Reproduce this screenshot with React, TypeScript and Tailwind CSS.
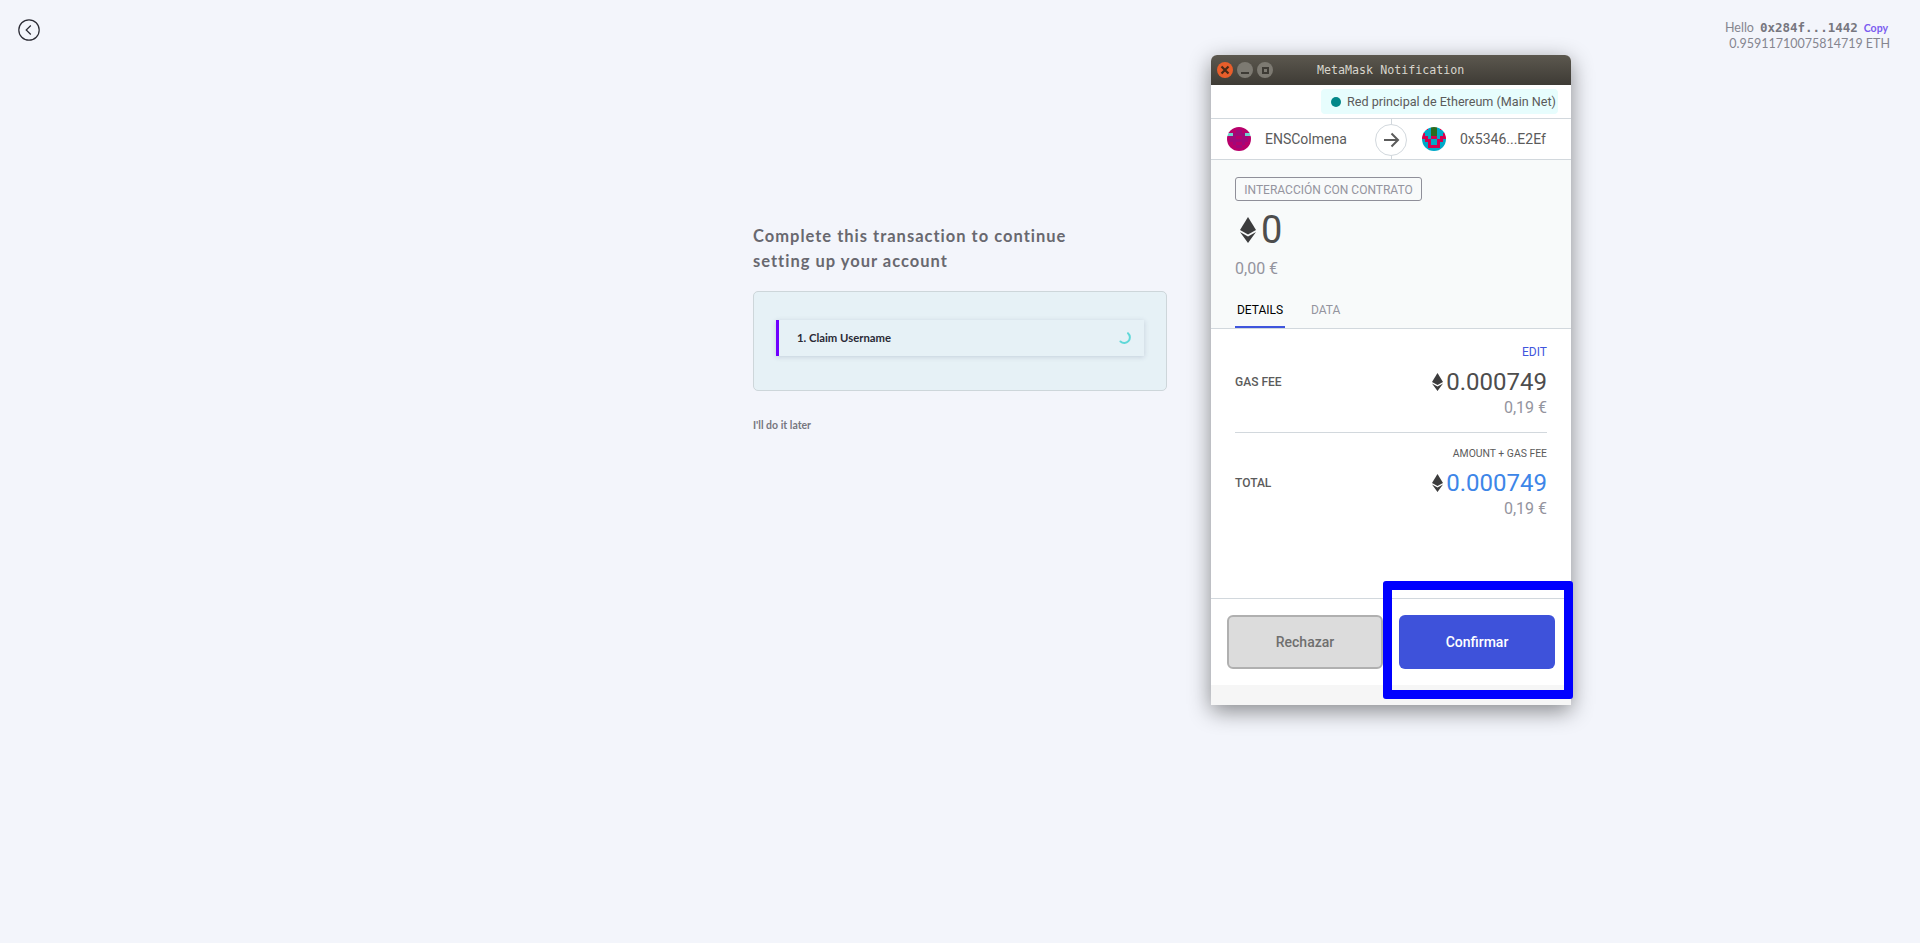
import React from 'react';

const EthIcon = ({ className }: { className: string }) => (
  <svg viewBox="0 0 16 26" className={className}>
    <path d="M8 0 L16 13 L8 17.5 L0 13 Z" fill="#3c3c3d" />
    <path d="M8 19.5 L16 15 L8 26 L0 15 Z" fill="#3c3c3d" />
  </svg>
);

const Identicon = ({ cells, colors }: { cells: string[]; colors: string[] }) => (
  <svg viewBox="0 0 8 8" className="h-6 w-6 rounded-full" shapeRendering="crispEdges">
    {cells.map((row, y) =>
      row
        .split('')
        .map((c, x) => (
          <rect key={`${x}-${y}`} x={x} y={y} width="1" height="1" fill={colors[Number(c)]} />
        )),
    )}
  </svg>
);

const Amount = ({ value, blue }: { value: string; blue?: boolean }) => (
  <div className="flex flex-col items-end">
    <div className="flex items-center">
      <EthIcon className="mr-[3px] h-[18px] w-[11px]" />
      <span className={`text-[24px] leading-[28px] ${blue ? 'text-[#3d86e8]' : 'text-[#4d4d4d]'}`}>
        {value}
      </span>
    </div>
    <span className="mt-[2px] text-[16px] leading-[20px] text-[#94949e]">0,19 €</span>
  </div>
);

const MetaMaskWindow = () => (
  <div className="absolute left-[1211px] top-[55px] flex h-[650px] w-[360px] flex-col rounded-t-[6px] bg-white font-['Roboto',sans-serif] shadow-[0_6px_22px_rgba(0,0,0,0.45)]">
    {/* barra de titulo */}
    <div className="relative flex h-[30px] items-center rounded-t-[6px] bg-gradient-to-b from-[#5c584f] to-[#3e3b35] pl-[6px]">
      <div className="flex items-center gap-[4px]">
        <div className="flex h-4 w-4 items-center justify-center rounded-full bg-[#e95e2b] text-[#4a2a17]">
          <svg viewBox="0 0 10 10" className="h-[10px] w-[10px]" stroke="currentColor" strokeWidth="2.2">
            <path d="M1.5 1.5 L8.5 8.5 M8.5 1.5 L1.5 8.5" />
          </svg>
        </div>
        <div className="flex h-4 w-4 items-end justify-center rounded-full bg-[#7d7a72] pb-[4px]">
          <div className="h-[2px] w-2 bg-[#3e3b35]" />
        </div>
        <div className="flex h-4 w-4 items-center justify-center rounded-full bg-[#7d7a72]">
          <div className="h-[7px] w-[7px] border-2 border-[#3e3b35]" />
        </div>
      </div>
      <span className="absolute left-[106px] top-[7px] font-['DejaVu_Sans_Mono',monospace] text-[11.67px] text-[#d8d5cd]">
        MetaMask Notification
      </span>
    </div>

    {/* red */}
    <div className="flex h-[34px] items-start justify-end border-b border-[#d2d8dd] pr-[13px] pt-[4px]">
      <div className="flex h-[25px] w-[237px] items-center rounded-[4px] bg-[#e7fdfd] pl-[10px] pt-[1px] text-[12.6px] text-[#5b5b5b]">
        <span className="mr-[6px] h-[10px] w-[10px] rounded-full bg-[#038789]" />
        Red principal de Ethereum (Main Net)
      </div>
    </div>

    {/* cuentas */}
    <div className="relative flex h-[41px] items-center border-b border-[#d2d8dd] text-[14px] text-[#5b5b5b]">
      <div className="ml-4 flex items-center">
        <Identicon
          colors={['#b8006b', '#a0087a', '#6fd6cf', '#c4005f']}
          cells={['00000000', '00011000', '22111122', '01100110', '01111110', '00100100', '00011000', '00000000']}
        />
        <span className="ml-[14px] pt-[1px]">ENSColmena</span>
      </div>
      <div className="absolute bottom-0 left-[180px] top-0 w-[1px] bg-[#d2d8dd]" />
      <div className="absolute left-[164px] top-[5px] flex h-8 w-8 items-center justify-center rounded-full border border-[#d2d8dd] bg-white text-[#5b5b5b]">
        <svg viewBox="0 0 18 18" className="h-[18px] w-[18px]" fill="none" stroke="currentColor" strokeWidth="2">
          <path d="M2 9 H16 M9.5 2.5 L16 9 L9.5 15.5" />
        </svg>
      </div>
      <div className="absolute left-[211px] flex items-center">
        <Identicon
          colors={['#00a9c9', '#d4004f', '#2b6b1f']}
          cells={['11022011', '00022000', '10022001', '11011011', '01100110', '00100100', '00111100', '00000000']}
        />
        <span className="ml-[14px] pt-[1px]">0x5346...E2Ef</span>
      </div>
    </div>

    {/* resumen */}
    <div className="flex h-[169px] flex-col border-b border-[#d2d8dd] bg-[#f8fafa] pl-6 pt-[17px]">
      <div className="flex h-6 w-[187px] items-center justify-center rounded-[3px] border border-[#8f8f99] pt-[1px] text-[12px] text-[#94949e]">
        INTERACCIÓN CON CONTRATO
      </div>
      <div className="mt-[11px] flex h-[36px] items-center pl-[5px]">
        <EthIcon className="mr-[5px] h-[26px] w-4" />
        <span className="text-[38px] leading-[36px] text-[#4d4d4d]">0</span>
      </div>
      <span className="mt-[11px] text-[16px] leading-[20px] text-[#94949e]">0,00 €</span>
      <div className="mt-[21px] flex text-[12px]">
        <div className="h-[28px] w-[50px] border-b-2 border-[#3f55dd] pt-[1px] text-center text-black">DETAILS</div>
        <div className="ml-[26px] pt-[1px] text-[#94949e]">DATA</div>
      </div>
    </div>

    {/* detalles */}
    <div className="flex h-[270px] flex-col border-b border-[#d2d8dd] px-6 pt-[15px]">
      <div className="text-right text-[12px] leading-[16px] text-[#3f55dd]">EDIT</div>
      <div className="mt-[8px] flex justify-between">
        <span className="mt-[6px] text-[12px] font-medium leading-[16px] text-[#5b5b5b]">GAS FEE</span>
        <Amount value="0.000749" />
      </div>
      <div className="mt-[14px] border-t border-[#d2d8dd]" />
      <div className="mt-[13px] text-right text-[10.4px] leading-[16px] text-[#5b5b5b]">AMOUNT + GAS FEE</div>
      <div className="mt-[7px] flex justify-between">
        <span className="mt-[6px] text-[12px] font-medium leading-[16px] text-[#5b5b5b]">TOTAL</span>
        <Amount value="0.000749" blue />
      </div>
    </div>

    {/* botones */}
    <div className="flex h-[86px] items-start gap-4 px-4 pt-[16px]">
      <button className="h-[54px] w-[156px] rounded-[6px] border-2 border-[#b0b0b0] bg-[#dcdcdc] text-[14px] font-medium text-[#6f6f6f]">
        Rechazar
      </button>
      <button className="h-[54px] w-[156px] rounded-[6px] bg-[#3e52da] text-[14px] font-medium text-white">
        Confirmar
      </button>
    </div>
    <div className="flex-1 bg-[#f6f6f6]" />

    {/* marca azul sobre la captura */}
    <div className="absolute left-[172px] top-[526px] h-[118px] w-[190px] rounded-[3px] border-[9px] border-[#0000ff]" />
  </div>
);

const App = () => (
  <div className="relative h-[943px] overflow-hidden bg-[#f3f5fb] font-['Lato',sans-serif]">
    <div className="flex items-start justify-between pl-[18px] pr-[30px] pt-[19px]">
      <svg viewBox="0 0 22 22" className="h-[22px] w-[22px]" fill="none" stroke="#2a2a33" strokeWidth="1.2">
        <circle cx="11" cy="11" r="10.2" />
        <path d="M12.8 6.5 L8.2 11 L12.8 15.5" />
      </svg>
      <div className="mt-[1px] flex flex-col items-end text-[12.5px] leading-[16px] text-[#85858f]">
        <div className="flex items-baseline">
          Hello
          <span className="ml-[6px] font-['DejaVu_Sans_Mono',monospace] text-[12.5px] font-bold text-[#77777f]">0x284f...1442</span>
          <span className="ml-[6px] mr-[2px] text-[10.5px] font-bold text-[#7a5cf0]">Copy</span>
        </div>
        <span>0.95911710075814719 ETH</span>
      </div>
    </div>

    <div className="ml-[753px] mt-[172px] w-[414px]">
      <h1 className="text-[16.5px] font-bold leading-[24.5px] tracking-[1px] text-[#68686f]">
        Complete this transaction to continue
        <br />
        setting up your account
      </h1>
      <div className="mt-[18px] h-[100px] rounded-[5px] border border-[#cdd6da] bg-[#e6f1f6] px-[22px] pt-[28px]">
        <div className="flex h-[36px] items-center justify-between border-l-[3px] border-[#7000ff] pl-[18px] pr-[13px] shadow-[0_1px_5px_rgba(60,70,110,0.2)]">
          <span className="text-[11.3px] font-bold text-[#2a2a35]">1. Claim Username</span>
          <svg viewBox="0 0 12 12" className="h-3 w-3" fill="none" stroke="#5fd8d8" strokeWidth="2">
            <path d="M9 1.2 A5 5 0 0 1 1.5 9.5" strokeLinecap="round" />
          </svg>
        </div>
      </div>
      <div className="mt-[27px] text-[10.5px] font-bold text-[#77777f]">I'll do it later</div>
    </div>

    <MetaMaskWindow />
  </div>
);

export default App;
